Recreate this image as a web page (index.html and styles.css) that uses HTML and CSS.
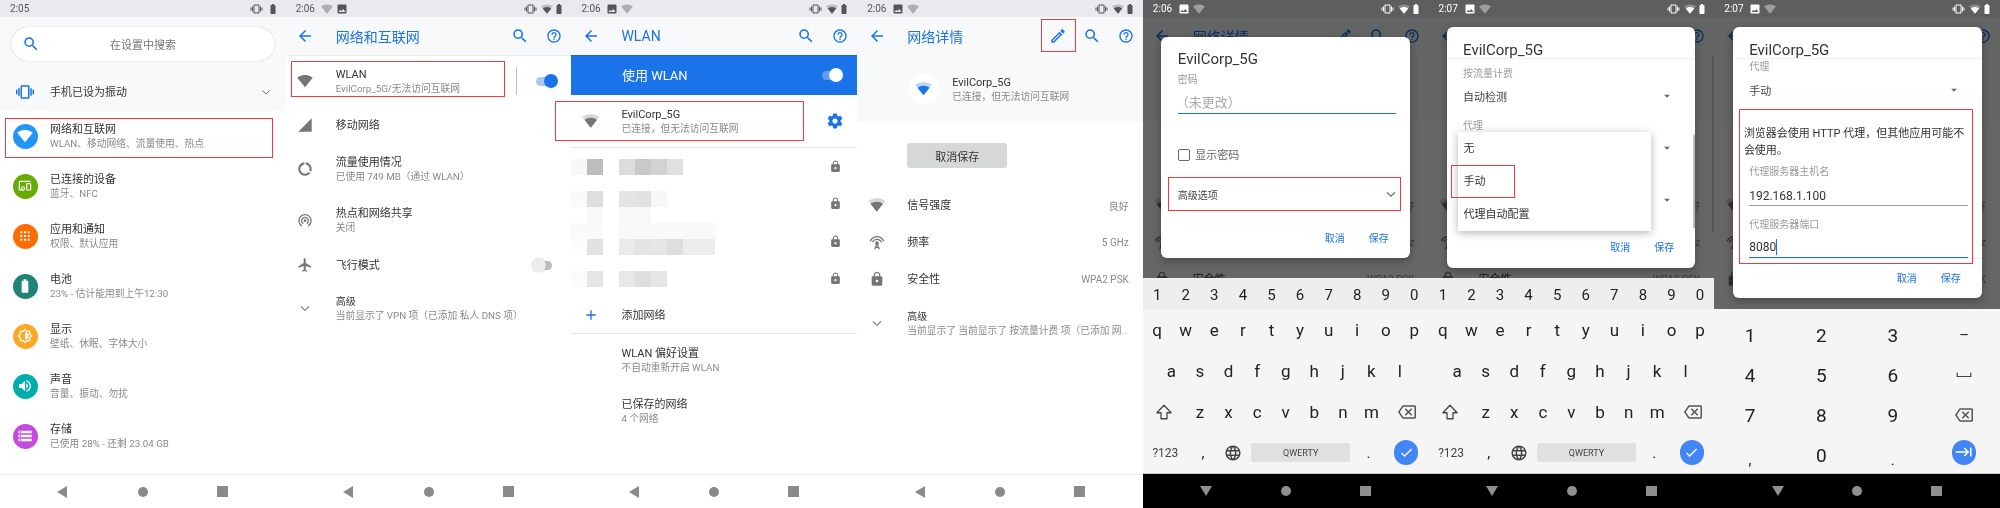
FILE: index.html
```html
<!DOCTYPE html>
<html lang="zh-CN">
<head>
<meta charset="utf-8">
<title>WLAN 代理设置步骤</title>
<link rel="stylesheet" href="styles.css">
</head>
<body>
<svg class="sprite" aria-hidden="true">
<symbol id="search" viewBox="0 0 24 24"><path d="M15.5 14h-.79l-.28-.27A6.471 6.471 0 0 0 16 9.5 6.5 6.5 0 1 0 9.5 16c1.61 0 3.09-.59 4.23-1.57l.27.28v.79l5 4.99L20.49 19l-4.99-5zm-6 0C7.01 14 5 11.99 5 9.5S7.01 5 9.5 5 14 7.01 14 9.5 11.99 14 9.5 14z"/></symbol>
<symbol id="back" viewBox="0 0 24 24"><path d="M20 11H7.83l5.59-5.59L12 4l-8 8 8 8 1.41-1.41L7.83 13H20v-2z"/></symbol>
<symbol id="help" viewBox="0 0 24 24"><path d="M11 18h2v-2h-2v2zm1-16C6.48 2 2 6.48 2 12s4.48 10 10 10 10-4.48 10-10S17.52 2 12 2zm0 18c-4.41 0-8-3.59-8-8s3.59-8 8-8 8 3.59 8 8-3.59 8-8 8zm0-14c-2.21 0-4 1.79-4 4h2c0-1.1.9-2 2-2s2 .9 2 2c0 2-3 1.75-3 5h2c0-2.25 3-2.5 3-5 0-2.21-1.79-4-4-4z"/></symbol>
<symbol id="vibrate" viewBox="0 0 24 24"><path d="M0 15h2V9H0v6zm3 2h2V7H3v10zm19-8v6h2V9h-2zm-3 8h2V7h-2v10zM16.5 3h-9C6.67 3 6 3.67 6 4.5v15c0 .83.67 1.5 1.5 1.5h9c.83 0 1.5-.67 1.5-1.5v-15c0-.83-.67-1.5-1.5-1.5zM16 19H8V5h8v14z"/></symbol>
<symbol id="chev" viewBox="0 0 24 24"><path d="M6 9.5l6 6 6-6" fill="none" stroke="currentColor" stroke-width="1.6"/></symbol>
<symbol id="wifi" viewBox="0 0 24 24"><path d="M12.01 21.49L23.64 7c-.45-.34-4.93-4-11.64-4C5.28 3 .81 6.66.36 7l11.63 14.49.01.01.01-.01z"/></symbol>
<symbol id="wifi3" viewBox="0 0 24 24"><path opacity=".3" d="M12.01 21.49L23.64 7c-.45-.34-4.93-4-11.64-4C5.28 3 .81 6.66.36 7l11.63 14.49.01.01.01-.01z"/><path d="M3.53 10.95l8.46 10.54.01.01.01-.01 8.46-10.54C20.04 10.62 16.81 8 12 8c-4.81 0-8.04 2.62-8.47 2.95z"/></symbol>
<symbol id="signal" viewBox="0 0 24 24"><path d="M2 22h20V2z"/></symbol>
<symbol id="data" viewBox="0 0 24 24"><path d="M13 2.05v3.03c3.39.49 6 3.39 6 6.92 0 .9-.18 1.75-.48 2.54l2.6 1.53c.56-1.24.88-2.62.88-4.07 0-5.18-3.95-9.45-9-9.95zM12 19c-3.87 0-7-3.13-7-7 0-3.53 2.61-6.43 6-6.92V2.05c-5.06.5-9 4.76-9 9.95 0 5.52 4.47 10 9.99 10 3.31 0 6.24-1.61 8.06-4.09l-2.6-1.53C16.17 17.98 14.21 19 12 19z"/></symbol>
<symbol id="tether" viewBox="0 0 24 24"><path d="M12 11c-1.1 0-2 .9-2 2s.9 2 2 2 2-.9 2-2-.9-2-2-2zm6 2c0-3.31-2.69-6-6-6s-6 2.69-6 6c0 2.22 1.21 4.15 3 5.19l1-1.74c-1.19-.7-2-1.97-2-3.45 0-2.21 1.79-4 4-4s4 1.79 4 4c0 1.48-.81 2.75-2 3.45l1 1.74c1.79-1.04 3-2.97 3-5.19zM12 3C6.48 3 2 7.48 2 13c0 3.7 2.01 6.92 4.99 8.65l1-1.73C5.61 18.53 4 15.96 4 13c0-4.42 3.58-8 8-8s8 3.58 8 8c0 2.96-1.61 5.53-4 6.92l1 1.73c2.99-1.73 5-4.95 5-8.65 0-5.52-4.48-10-10-10z"/></symbol>
<symbol id="plane" viewBox="0 0 24 24"><path d="M21 16v-2l-8-5V3.5c0-.83-.67-1.5-1.5-1.5S10 2.67 10 3.5V9l-8 5v2l8-2.5V19l-2 1.5V22l3.5-1 3.5 1v-1.5L13 19v-5.5l8 2.5z"/></symbol>
<symbol id="gear" viewBox="0 0 24 24"><path d="M19.43 12.98c.04-.32.07-.64.07-.98s-.03-.66-.07-.98l2.11-1.65c.19-.15.24-.42.12-.64l-2-3.46c-.12-.22-.39-.3-.61-.22l-2.49 1c-.52-.4-1.08-.73-1.69-.98l-.38-2.65C14.46 2.18 14.25 2 14 2h-4c-.25 0-.46.18-.49.42l-.38 2.65c-.61.25-1.17.59-1.69.98l-2.49-1c-.23-.09-.49 0-.61.22l-2 3.46c-.13.22-.07.49.12.64l2.11 1.65c-.04.32-.07.65-.07.98s.03.66.07.98l-2.11 1.65c-.19.15-.24.42-.12.64l2 3.46c.12.22.39.3.61.22l2.49-1c.52.4 1.08.73 1.69.98l.38 2.65c.03.24.24.42.49.42h4c.25 0 .46-.18.49-.42l.38-2.65c.61-.25 1.17-.59 1.69-.98l2.49 1c.23.09.49 0 .61-.22l2-3.46c.12-.22.07-.49-.12-.64l-2.11-1.65zM12 15.5c-1.93 0-3.5-1.57-3.5-3.5s1.57-3.5 3.5-3.5 3.5 1.57 3.5 3.5-1.57 3.5-3.5 3.5z"/></symbol>
<symbol id="lock" viewBox="0 0 24 24"><path d="M18 8h-1V6c0-2.76-2.24-5-5-5S7 3.24 7 6v2H6c-1.1 0-2 .9-2 2v10c0 1.1.9 2 2 2h12c1.1 0 2-.9 2-2V10c0-1.1-.9-2-2-2zm-6 9c-1.1 0-2-.9-2-2s.9-2 2-2 2 .9 2 2-.9 2-2 2zm3.1-9H8.9V6c0-1.71 1.39-3.1 3.1-3.1 1.71 0 3.1 1.39 3.1 3.1v2z"/></symbol>
<symbol id="add" viewBox="0 0 24 24"><path d="M19 13h-6v6h-2v-6H5v-2h6V5h2v6h6v2z"/></symbol>
<symbol id="edit" viewBox="0 0 24 24"><path d="M3 17.25V21h3.75L17.81 9.94l-3.75-3.75L3 17.25zM5.92 19H5v-.92l9.06-9.06.92.92L5.92 19zM20.71 5.63l-2.34-2.34c-.39-.39-1.02-.39-1.41 0l-1.83 1.83 3.75 3.75 1.83-1.83c.39-.39.39-1.02 0-1.41z"/></symbol>
<symbol id="image" viewBox="0 0 24 24"><path d="M21 19V5c0-1.1-.9-2-2-2H5c-1.1 0-2 .9-2 2v14c0 1.1.9 2 2 2h14c1.1 0 2-.9 2-2zM8.5 13.5l2.5 3.01L14.5 12l4.5 6H5l3.5-4.5z"/></symbol>
<symbol id="battery" viewBox="0 0 24 24"><path d="M15.67 4H14V2h-4v2H8.33C7.6 4 7 4.6 7 5.33v15.33C7 21.4 7.6 22 8.33 22h7.33c.74 0 1.34-.6 1.34-1.33V5.33C17 4.6 16.4 4 15.67 4z"/></symbol>
<symbol id="backspace" viewBox="0 0 24 24"><path d="M22 3H7c-.69 0-1.23.35-1.59.88L0 12l5.41 8.11c.36.53.9.89 1.59.89h15c1.1 0 2-.9 2-2V5c0-1.1-.9-2-2-2zm0 16H7.07L2.4 12l4.66-7H22v14zM10.41 17L14 13.41 17.59 17 19 15.59 15.41 12 19 8.41 17.59 7 14 10.59 10.41 7 9 8.41 12.59 12 9 15.59z"/></symbol>
<symbol id="globe" viewBox="0 0 24 24"><path d="M11.99 2C6.47 2 2 6.48 2 12s4.47 10 9.99 10C17.52 22 22 17.52 22 12S17.52 2 11.99 2zm6.93 6h-2.95c-.32-1.25-.78-2.45-1.38-3.56 1.84.63 3.37 1.91 4.33 3.56zM12 4.04c.83 1.2 1.48 2.53 1.91 3.96h-3.82c.43-1.43 1.08-2.76 1.91-3.96zM4.26 14C4.1 13.36 4 12.69 4 12s.1-1.36.26-2h3.38c-.08.66-.14 1.32-.14 2 0 .68.06 1.34.14 2H4.26zm.82 2h2.95c.32 1.25.78 2.45 1.38 3.56-1.84-.63-3.37-1.9-4.33-3.56zm2.95-8H5.08c.96-1.66 2.49-2.93 4.33-3.56C8.81 5.55 8.35 6.75 8.03 8zM12 19.96c-.83-1.2-1.48-2.53-1.91-3.96h3.82c-.43 1.43-1.08 2.76-1.91 3.96zM14.34 14H9.66c-.09-.66-.16-1.32-.16-2 0-.68.07-1.35.16-2h4.68c.09.65.16 1.32.16 2 0 .68-.07 1.34-.16 2zm.25 5.56c.6-1.11 1.06-2.31 1.38-3.56h2.95c-.96 1.65-2.49 2.93-4.33 3.56zM16.36 14c.08-.66.14-1.32.14-2 0-.68-.06-1.34-.14-2h3.38c.16.64.26 1.31.26 2s-.1 1.36-.26 2h-3.38z"/></symbol>
<symbol id="check" viewBox="0 0 24 24"><path d="M9 16.17L4.83 12l-1.42 1.41L9 19 21 7l-1.41-1.41z"/></symbol>
<symbol id="tab" viewBox="0 0 24 24"><path d="M11.59 7.41L15.17 11H1v2h14.17l-3.59 3.59L13 18l6-6-6-6-1.41 1.41zM20 6v12h2V6h-2z"/></symbol>
<symbol id="shift" viewBox="0 0 24 24"><path d="M12 3L2.500 13H8v8h8v-8h5.500z" fill="none" stroke="currentColor" stroke-width="1.7" stroke-linejoin="round"/></symbol>
<symbol id="space" viewBox="0 0 24 24"><path d="M3 9v5h18V9" fill="none" stroke="currentColor" stroke-width="1.6"/></symbol>
<symbol id="devices" viewBox="0 0 24 24"><path d="M20 5H5a1.500 1.500 0 0 0-1.500 1.500V18H11" fill="none" stroke="currentColor" stroke-width="1.8"/><circle cx="9" cy="15.500" r="2.300" fill="none" stroke="currentColor" stroke-width="1.600"/><rect x="14.500" y="8.500" width="6" height="9.500" rx="1" fill="none" stroke="currentColor" stroke-width="1.800"/></symbol>
<symbol id="apps" viewBox="0 0 24 24"><path d="M5 5h3v3H5zM10.500 5h3v3h-3zM16 5h3v3h-3zM5 10.500h3v3H5zM10.500 10.500h3v3h-3zM16 10.500h3v3h-3zM5 16h3v3H5zM10.500 16h3v3h-3zM16 16h3v3h-3z"/></symbol>
<symbol id="bright" viewBox="0 0 24 24"><path d="M20 15.310L23.310 12 20 8.690V4h-4.690L12 .69 8.690 4H4v4.690L.69 12 4 15.310V20h4.690L12 23.310 15.310 20H20v-4.690zm-2-.83V18h-3.520L12 20.480 9.520 18H6v-3.520L3.520 12 6 9.520V6h3.520L12 3.520 14.480 6H18v3.520L20.480 12 18 14.480zM12 6.500v11c3.040 0 5.500-2.460 5.500-5.500S15.040 6.500 12 6.500z"/></symbol>
<symbol id="volume" viewBox="0 0 24 24"><path d="M14 3.230v2.060c2.890.86 5 3.540 5 6.710s-2.110 5.840-5 6.700v2.070c4.010-.91 7-4.490 7-8.770 0-4.280-2.990-7.860-7-8.770zM16.500 12c0-1.770-1.020-3.290-2.500-4.030v8.050c1.480-.73 2.500-2.250 2.500-4.020zM3 9v6h4l5 5V4L7 9H3z"/></symbol>
<symbol id="storage" viewBox="0 0 24 24"><path d="M2 20h20v-4H2v4zm2-3h2v2H4v-2zM2 4v4h20V4H2zm4 3H4V5h2v2zm-4 7h20v-4H2v4zm2-3h2v2H4v-2z"/></symbol>
<symbol id="ant" viewBox="0 0 24 24"><path d="M12 3C6.900 3 2.500 6.200 1 10.500l2 .7C4.200 7.700 7.800 5 12 5s7.800 2.700 9 6.200l2-.7C21.500 6.200 17.100 3 12 3zm0 4c-3.500 0-6.500 2.100-7.800 5l1.900.8C7.100 10.500 9.400 9 12 9s4.900 1.500 5.900 3.800l1.900-.8C18.500 9.100 15.500 7 12 7zm0 4c-1.500 0-2.800 1.200-2.800 2.800 0 .9.400 1.700 1 2.200L7.500 23h2l.8-2h3.400l.8 2h2l-2.700-7c.6-.5 1-1.300 1-2.200C14.800 12.200 13.500 11 12 11zm-1 8l1-2.600 1 2.600h-2z"/></symbol>
<symbol id="ddown" viewBox="0 0 24 24"><path d="M7 10l5 5 5-5z"/></symbol>
</svg>

<main class="strip">

<!-- 1: settings home -->
<section class="phone">
  <div class="status"><span class="clock">2:05</span><span class="status-right"><svg class="si vib"><use href="#vibrate"/></svg><svg class="si"><use href="#battery"/></svg></span></div>
  <div class="home-top">
    <div class="searchbox"><svg class="i blue"><use href="#search"/></svg><span>在设置中搜索</span></div>
    <div class="row vibrate-row">
      <span class="cell wide"><svg class="i blue"><use href="#vibrate"/></svg></span>
      <span class="title">手机已设为振动</span>
      <svg class="chev-end"><use href="#chev"/></svg>
    </div>
  </div>
  <div class="row h50"><span class="cell wide"><span class="badge c-wifi"><svg><use href="#wifi"/></svg></span></span><div class="txt"><div class="title">网络和互联网</div><div class="sub">WLAN、移动网络、流量使用、热点</div></div></div>
  <div class="row h50"><span class="cell wide"><span class="badge c-dev"><svg><use href="#devices"/></svg></span></span><div class="txt"><div class="title">已连接的设备</div><div class="sub">蓝牙、NFC</div></div></div>
  <div class="row h50"><span class="cell wide"><span class="badge c-app"><svg><use href="#apps"/></svg></span></span><div class="txt"><div class="title">应用和通知</div><div class="sub">权限、默认应用</div></div></div>
  <div class="row h50"><span class="cell wide"><span class="badge c-bat"><svg><use href="#battery"/></svg></span></span><div class="txt"><div class="title">电池</div><div class="sub">23% - 估计能用到上午12:30</div></div></div>
  <div class="row h50"><span class="cell wide"><span class="badge c-dis"><svg><use href="#bright"/></svg></span></span><div class="txt"><div class="title">显示</div><div class="sub">壁纸、休眠、字体大小</div></div></div>
  <div class="row h50"><span class="cell wide"><span class="badge c-snd"><svg><use href="#volume"/></svg></span></span><div class="txt"><div class="title">声音</div><div class="sub">音量、振动、勿扰</div></div></div>
  <div class="row h50"><span class="cell wide"><span class="badge c-sto"><svg><use href="#storage"/></svg></span></span><div class="txt"><div class="title">存储</div><div class="sub">已使用 28% - 还剩 23.04 GB</div></div></div>
  <div class="nav"><span class="nk"><svg class="nb"><path d="M10 0v12L0 6z"/></svg></span><span class="nk"><i class="nc"></i></span><span class="nk"><i class="ns"></i></span></div>
  <div class="mark m1"></div>
</section>

<!-- 2: network and internet -->
<section class="phone">
  <div class="status"><span class="clock">2:06</span><svg class="si dimmed"><use href="#wifi"/></svg><svg class="si"><use href="#image"/></svg><span class="status-right"><svg class="si vib"><use href="#vibrate"/></svg><svg class="si"><use href="#wifi3"/></svg><svg class="si"><use href="#battery"/></svg></span></div>
  <header class="appbar shadow"><span class="cell back"><svg class="i blue"><use href="#back"/></svg></span><h1>网络和互联网</h1><span class="act"><svg class="i blue"><use href="#search"/></svg></span><span class="act"><svg class="i16 blue"><use href="#help"/></svg></span></header>
  <div class="row h52"><span class="cell"><svg class="li"><use href="#wifi"/></svg></span><div class="txt"><div class="title">WLAN</div><div class="sub">EvilCorp_5G/无法访问互联网</div></div><span class="vline"></span><span class="switch on"></span></div>
  <div class="row h36"><span class="cell"><svg class="li"><use href="#signal"/></svg></span><div class="title">移动网络</div></div>
  <div class="row h52"><span class="cell"><svg class="li"><use href="#data"/></svg></span><div class="txt"><div class="title">流量使用情况</div><div class="sub">已使用 749 MB（通过 WLAN）</div></div></div>
  <div class="row h50"><span class="cell"><svg class="li"><use href="#tether"/></svg></span><div class="txt"><div class="title">热点和网络共享</div><div class="sub">关闭</div></div></div>
  <div class="row h40"><span class="cell"><svg class="li"><use href="#plane"/></svg></span><div class="title">飞行模式</div><span class="switch off"></span></div>
  <div class="row h46"><span class="cell"><svg class="li"><use href="#chev"/></svg></span><div class="txt"><div class="title small">高级</div><div class="sub">当前显示了 VPN 项（已添加 私人 DNS 项）</div></div></div>
  <div class="nav"><span class="nk"><svg class="nb"><path d="M10 0v12L0 6z"/></svg></span><span class="nk"><i class="nc"></i></span><span class="nk"><i class="ns"></i></span></div>
  <div class="mark m2"></div>
</section>

<!-- 3: WLAN -->
<section class="phone">
  <div class="status"><span class="clock">2:06</span><svg class="si"><use href="#image"/></svg><svg class="si dimmed"><use href="#wifi"/></svg><span class="status-right"><svg class="si vib"><use href="#vibrate"/></svg><svg class="si"><use href="#wifi3"/></svg><svg class="si"><use href="#battery"/></svg></span></div>
  <header class="appbar shadow"><span class="cell back"><svg class="i blue"><use href="#back"/></svg></span><h1>WLAN</h1><span class="act"><svg class="i blue"><use href="#search"/></svg></span><span class="act"><svg class="i16 blue"><use href="#help"/></svg></span></header>
  <div class="use-wlan"><span class="use-label">使用 WLAN</span><span class="switch white"></span></div>
  <div class="row connected"><span class="cell"><svg class="li wide17"><use href="#wifi3"/></svg></span><div class="txt"><div class="title">EvilCorp_5G</div><div class="sub">已连接，但无法访问互联网</div></div><svg class="gear"><use href="#gear"/></svg></div>
  <div class="wifi-list">
    <svg class="censor" viewBox="0 0 144 128">
      <rect x="0" y="0" width="16" height="16" fill="#f7f7f7"/><rect x="16" y="0" width="16" height="16" fill="#bdbdbd"/><rect x="48" y="0" width="16" height="16" fill="#dcdcdc"/><rect x="64" y="0" width="16" height="16" fill="#c9c9c9"/><rect x="80" y="0" width="16" height="16" fill="#d2d2d2"/><rect x="96" y="0" width="16" height="16" fill="#e0e0e0"/>
      <rect x="0" y="32" width="16" height="16" fill="#fafafa"/><rect x="16" y="32" width="16" height="16" fill="#dedede"/><rect x="48" y="32" width="16" height="16" fill="#e4e4e4"/><rect x="64" y="32" width="16" height="16" fill="#e2e2e2"/><rect x="80" y="32" width="16" height="16" fill="#f7f7f7"/>
      <rect x="16" y="48" width="16" height="16" fill="#f8f8f8"/><rect x="48" y="48" width="32" height="16" fill="#f8f8f8"/>
      <rect x="0" y="64" width="32" height="16" fill="#fafafa"/><rect x="48" y="64" width="96" height="16" fill="#f9f9f9"/>
      <rect x="0" y="80" width="16" height="16" fill="#fcfcfc"/><rect x="16" y="80" width="16" height="16" fill="#e2e2e2"/><rect x="48" y="80" width="16" height="16" fill="#eaeaea"/><rect x="64" y="80" width="16" height="16" fill="#e4e4e4"/><rect x="80" y="80" width="16" height="16" fill="#e6e6e6"/><rect x="96" y="80" width="16" height="16" fill="#dedede"/><rect x="112" y="80" width="32" height="16" fill="#ececec"/>
      <rect x="0" y="112" width="16" height="16" fill="#fbfbfb"/><rect x="16" y="112" width="16" height="16" fill="#e5e5e5"/><rect x="48" y="112" width="16" height="16" fill="#e8e8e8"/><rect x="64" y="112" width="16" height="16" fill="#dedede"/><rect x="80" y="112" width="16" height="16" fill="#e6e6e6"/>
    </svg>
    <div class="lock-row"><svg class="lock"><use href="#lock"/></svg></div>
    <div class="lock-row"><svg class="lock"><use href="#lock"/></svg></div>
    <div class="lock-row"><svg class="lock"><use href="#lock"/></svg></div>
    <div class="lock-row"><svg class="lock"><use href="#lock"/></svg></div>
  </div>
  <div class="row add-row"><span class="cell"><svg class="li plus"><use href="#add"/></svg></span><div class="title">添加网络</div></div>
  <div class="row h51"><span class="cell"></span><div class="txt"><div class="title">WLAN 偏好设置</div><div class="sub">不自动重新开启 WLAN</div></div></div>
  <div class="row h51"><span class="cell"></span><div class="txt"><div class="title">已保存的网络</div><div class="sub">4 个网络</div></div></div>
  <div class="nav"><span class="nk"><svg class="nb"><path d="M10 0v12L0 6z"/></svg></span><span class="nk"><i class="nc"></i></span><span class="nk"><i class="ns"></i></span></div>
  <div class="mark m3"></div>
</section>

<!-- 4: network details -->
<section class="phone">
  <div class="status"><span class="clock">2:06</span><svg class="si"><use href="#image"/></svg><svg class="si dimmed"><use href="#wifi"/></svg><span class="status-right"><svg class="si vib"><use href="#vibrate"/></svg><svg class="si"><use href="#wifi3"/></svg><svg class="si"><use href="#battery"/></svg></span></div>
  <header class="appbar"><span class="cell back"><svg class="i blue"><use href="#back"/></svg></span><h1>网络详情</h1><span class="act"><svg class="i blue"><use href="#edit"/></svg></span><span class="act"><svg class="i blue"><use href="#search"/></svg></span><span class="act"><svg class="i16 blue"><use href="#help"/></svg></span></header>
  <div class="hero"><span class="hero-ic"><svg><use href="#wifi3"/></svg></span><div class="txt"><div class="title">EvilCorp_5G</div><div class="sub">已连接，但无法访问互联网</div></div></div>
  <div class="forget">取消保存</div>
  <div class="row h37"><span class="cell"><svg class="li wide17"><use href="#wifi3"/></svg></span><div class="title">信号强度</div><span class="val">良好</span></div>
  <div class="row h37"><span class="cell"><svg class="li"><use href="#ant"/></svg></span><div class="title">频率</div><span class="val">5 GHz</span></div>
  <div class="row h37"><span class="cell"><svg class="li"><use href="#lock"/></svg></span><div class="title">安全性</div><span class="val">WPA2 PSK</span></div>
  <div class="row h51"><span class="cell"><svg class="li"><use href="#chev"/></svg></span><div class="txt clip"><div class="title small">高级</div><div class="sub">当前显示了 当前显示了 按流量计费 项（已添加 网..</div></div></div>
  <div class="nav"><span class="nk"><svg class="nb"><path d="M10 0v12L0 6z"/></svg></span><span class="nk"><i class="nc"></i></span><span class="nk"><i class="ns"></i></span></div>
  <div class="mark m4"></div>
</section>

<!-- 5: password dialog -->
<section class="phone dim">
  <div class="status"><span class="clock">2:06</span><svg class="si"><use href="#image"/></svg><svg class="si dimmed"><use href="#wifi"/></svg><span class="status-right"><svg class="si vib"><use href="#vibrate"/></svg><svg class="si"><use href="#wifi3"/></svg><svg class="si"><use href="#battery"/></svg></span></div>
  <header class="appbar"><span class="cell back"><svg class="i blue"><use href="#back"/></svg></span><h1>网络详情</h1><span class="act"><svg class="i blue"><use href="#edit"/></svg></span><span class="act"><svg class="i blue"><use href="#search"/></svg></span><span class="act"><svg class="i16 blue"><use href="#help"/></svg></span></header>
  <div class="hero"></div>
  <div class="forget blank"></div>
  <div class="row h37"><span class="cell"><svg class="li wide17"><use href="#wifi3"/></svg></span><span class="val">良好</span></div>
  <div class="row h37"><span class="cell"><svg class="li"><use href="#ant"/></svg></span><span class="val">5 GHz</span></div>
  <div class="row h37"><span class="cell"><svg class="li"><use href="#lock"/></svg></span><div class="title">安全性</div><span class="val">WPA2 PSK</span></div>
  <div class="scrim"></div>
  <div class="dialog d5">
    <div class="dlg-name">EvilCorp_5G</div>
    <div class="fld-label pw-label">密码</div>
    <div class="pw-input">（未更改）</div>
    <div class="check-row"><i class="box"></i><span>显示密码</span></div>
    <div class="adv-row"><span>高级选项</span><svg><use href="#chev"/></svg></div>
    <div class="actions a5"><span>取消</span><span>保存</span></div>
  </div>
  <div class="kbd">
    <div class="numrow"><span>1</span><span>2</span><span>3</span><span>4</span><span>5</span><span>6</span><span>7</span><span>8</span><span>9</span><span>0</span></div>
    <div class="krow"><span>q</span><span>w</span><span>e</span><span>r</span><span>t</span><span>y</span><span>u</span><span>i</span><span>o</span><span>p</span></div>
    <div class="krow inset"><span>a</span><span>s</span><span>d</span><span>f</span><span>g</span><span>h</span><span>j</span><span>k</span><span>l</span></div>
    <div class="krow"><span class="w15"><svg class="k-shift"><use href="#shift"/></svg></span><span>z</span><span>x</span><span>c</span><span>v</span><span>b</span><span>n</span><span>m</span><span class="w15"><svg class="k-back"><use href="#backspace"/></svg></span></div>
    <div class="krow last"><span class="w15 sym">?123</span><span>,</span><span><svg class="k-globe"><use href="#globe"/></svg></span><span class="spacebar"><b>QWERTY</b></span><span>.</span><span class="w15"><i class="go"><svg><use href="#check"/></svg></i></span></div>
  </div>
  <div class="nav"><span class="nk"><svg class="nb"><path d="M0 0h12L6 10z"/></svg></span><span class="nk"><i class="nc"></i></span><span class="nk"><i class="ns"></i></span></div>
  <div class="mark m5"></div>
</section>

<!-- 6: proxy dropdown -->
<section class="phone dim">
  <div class="status"><span class="clock">2:07</span><svg class="si"><use href="#image"/></svg><svg class="si dimmed"><use href="#wifi"/></svg><span class="status-right"><svg class="si vib"><use href="#vibrate"/></svg><svg class="si"><use href="#wifi3"/></svg><svg class="si"><use href="#battery"/></svg></span></div>
  <header class="appbar"><span class="cell back"><svg class="i blue"><use href="#back"/></svg></span><h1 class="covered"></h1><span class="act"><svg class="i blue"><use href="#edit"/></svg></span><span class="act"><svg class="i blue"><use href="#search"/></svg></span><span class="act"><svg class="i16 blue"><use href="#help"/></svg></span></header>
  <div class="hero"></div>
  <div class="forget blank"></div>
  <div class="row h37"><span class="cell"><svg class="li wide17"><use href="#wifi3"/></svg></span><span class="val">良好</span></div>
  <div class="row h37"><span class="cell"><svg class="li"><use href="#ant"/></svg></span><span class="val">5 GHz</span></div>
  <div class="row h37"><span class="cell"><svg class="li"><use href="#lock"/></svg></span><div class="title">安全性</div><span class="val">WPA2 PSK</span></div>
  <div class="scrim"><i class="page-scroll"></i></div>
  <div class="dialog d6">
    <div class="dlg-head">EvilCorp_5G</div>
    <div class="fld-label first">按流量计费</div>
    <div class="select"><span>自动检测</span><svg><use href="#ddown"/></svg></div>
    <div class="fld-label gap8">代理</div>
    <div class="select"><span></span><svg><use href="#ddown"/></svg></div>
    <div class="select spaced"><span></span><svg><use href="#ddown"/></svg></div>
    <div class="actions a6"><span>取消</span><span>保存</span></div>
    <i class="dlg-scroll"></i>
    <div class="popup"><div>无</div><div>手动</div><div>代理自动配置</div></div>
  </div>
  <div class="kbd">
    <div class="numrow"><span>1</span><span>2</span><span>3</span><span>4</span><span>5</span><span>6</span><span>7</span><span>8</span><span>9</span><span>0</span></div>
    <div class="krow"><span>q</span><span>w</span><span>e</span><span>r</span><span>t</span><span>y</span><span>u</span><span>i</span><span>o</span><span>p</span></div>
    <div class="krow inset"><span>a</span><span>s</span><span>d</span><span>f</span><span>g</span><span>h</span><span>j</span><span>k</span><span>l</span></div>
    <div class="krow"><span class="w15"><svg class="k-shift"><use href="#shift"/></svg></span><span>z</span><span>x</span><span>c</span><span>v</span><span>b</span><span>n</span><span>m</span><span class="w15"><svg class="k-back"><use href="#backspace"/></svg></span></div>
    <div class="krow last"><span class="w15 sym">?123</span><span>,</span><span><svg class="k-globe"><use href="#globe"/></svg></span><span class="spacebar"><b>QWERTY</b></span><span>.</span><span class="w15"><i class="go"><svg><use href="#check"/></svg></i></span></div>
  </div>
  <div class="nav"><span class="nk"><svg class="nb"><path d="M0 0h12L6 10z"/></svg></span><span class="nk"><i class="nc"></i></span><span class="nk"><i class="ns"></i></span></div>
  <div class="mark m6"></div>
</section>

<!-- 7: manual proxy -->
<section class="phone dim">
  <div class="status"><span class="clock">2:07</span><svg class="si"><use href="#image"/></svg><svg class="si dimmed"><use href="#wifi"/></svg><span class="status-right"><svg class="si vib"><use href="#vibrate"/></svg><svg class="si"><use href="#wifi3"/></svg><svg class="si"><use href="#battery"/></svg></span></div>
  <header class="appbar"><span class="cell back"><svg class="i blue"><use href="#back"/></svg></span><h1 class="covered"></h1><span class="act"><svg class="i blue"><use href="#edit"/></svg></span><span class="act"><svg class="i blue"><use href="#search"/></svg></span><span class="act"><svg class="i16 blue"><use href="#help"/></svg></span></header>
  <div class="hero"></div>
  <div class="forget blank"></div>
  <div class="row h37"><span class="cell"><svg class="li wide17"><use href="#wifi3"/></svg></span><span class="val">良好</span></div>
  <div class="row h37"><span class="cell"><svg class="li"><use href="#ant"/></svg></span><span class="val">5 GHz</span></div>
  <div class="row h37"><span class="cell"><svg class="li"><use href="#lock"/></svg></span><span class="val">WPA2 PSK</span></div>
  <div class="scrim"></div>
  <div class="dialog d7">
    <div class="dlg-head">EvilCorp_5G</div>
    <div class="fld-label tight">代理</div>
    <div class="select"><span>手动</span><svg><use href="#ddown"/></svg></div>
    <p class="proxy-note">浏览器会使用 HTTP 代理，但其他应用可能不<br>会使用。</p>
    <div class="fld-label host">代理服务器主机名</div>
    <div class="input-line">192.168.1.100</div>
    <div class="fld-label port">代理服务器端口</div>
    <div class="input-line focus">8080<i class="caret"></i></div>
    <div class="dlg-foot"><div class="actions a7"><span>取消</span><span>保存</span></div></div>
  </div>
  <div class="numpad">
    <span>1</span><span>2</span><span>3</span><span class="np-sym">–</span>
    <span>4</span><span>5</span><span>6</span><span><svg class="np-space"><use href="#space"/></svg></span>
    <span>7</span><span>8</span><span>9</span><span><svg class="k-back"><use href="#backspace"/></svg></span>
    <span class="np-punct">,</span><span>0</span><span class="np-punct">.</span><span><i class="go up"><svg><use href="#tab"/></svg></i></span>
  </div>
  <div class="nav"><span class="nk"><svg class="nb"><path d="M0 0h12L6 10z"/></svg></span><span class="nk"><i class="nc"></i></span><span class="nk"><i class="ns"></i></span></div>
  <div class="mark m7"></div>
</section>

</main>
</body>
</html>
```

FILE: styles.css
```css
* { box-sizing: border-box; }
html, body { margin: 0; padding: 0; background: #fff; }
body { font-family: Roboto, "Noto Sans CJK SC", sans-serif; color: #333; overflow: hidden; }
svg { fill: currentColor; display: block; }
i { font-style: normal; display: block; }
.sprite { position: absolute; width: 0; height: 0; }

.strip { display: grid; grid-template-columns: repeat(7, 1fr); width: 2000px; height: 508px; filter: blur(.35px); }
.phone { position: relative; height: 508px; overflow: hidden; background: #fff; display: flex; flex-direction: column; }

/* status bar */
.status { height: 17px; flex: none; display: flex; align-items: center; padding: 0 6.7px 0 10px; background: #e8eaed; color: #555; position: relative; }
.clock { font-size: 10px; width: 25px; flex: none; }
.si { width: 12px; height: 12px; margin-right: 3px; flex: none; }
.status-right { margin-left: auto; display: flex; align-items: center; }
.status-right .si { margin-right: 0; }
.status-right .vib { width: 13px; margin-right: 4px; }
.dimmed { opacity: .4; }

/* app bar */
.appbar { height: 38px; flex: none; display: flex; align-items: center; background: #f8f9fa; color: #1a73e8; position: relative; }
.appbar.shadow { box-shadow: 0 1px 1px rgba(0,0,0,.08); z-index: 1; }
.appbar h1 { margin: 0; flex: 1; font-size: 14px; font-weight: 400; color: #1a73e8; }
.back { width: 50px; }
.act { width: 34px; flex: none; display: flex; justify-content: center; }
.i { width: 18px; height: 18px; flex: none; }
.i16 { width: 16px; height: 16px; }
.blue { color: #1a73e8; }

/* rows */
.row { display: flex; align-items: center; flex: none; }
.row > .title { margin-top: 2px; }
.h36 { height: 36px; } .h37 { height: 37px; } .h40 { height: 40px; } .h46 { height: 46px; }
.h50 { height: 50px; } .h51 { height: 51px; } .h52 { height: 52px; }
.cell { width: 50px; flex: none; display: flex; justify-content: center; padding-right: 11px; color: #757575; }
.cell.wide { padding-right: 0; }
.txt { min-width: 0; margin-top: 2.5px; }
.title { font-size: 11px; line-height: 14px; color: #333; white-space: nowrap; }
.title.small { font-size: 10px; }
.sub { font-size: 9.75px; line-height: 14px; color: #8a8a8a; white-space: nowrap; }
.li { width: 16px; height: 16px; color: #757575; }
.wide17 { width: 17.5px; height: 17.5px; }
.clip { overflow: hidden; width: 221px; }

/* settings home */
.home-top { height: 94px; background: #f8f9fa; flex: none; padding-top: 10px; }
.searchbox { margin: 0 10.7px 0 11px; height: 34px; border-radius: 17px; background: #fff; box-shadow: 0 0 1px rgba(0,0,0,.35); display: flex; align-items: center; padding-left: 11px; font-size: 11px; color: #777; }
.searchbox span { margin-left: 70px; }
.vibrate-row { height: 38px; margin-top: 12px; }
.chev-end { width: 14px; height: 14px; margin-left: auto; margin-right: 12.7px; color: #666; }
.badge { width: 25px; height: 25px; border-radius: 50%; display: flex; align-items: center; justify-content: center; color: #fff; }
.badge svg { width: 16px; height: 16px; }
.c-wifi { background: #2196f3; } .c-dev { background: #67ab05; } .c-app { background: #ff6d00; }
.c-bat { background: #218377; } .c-dis { background: #ffa726; } .c-snd { background: #00acac; } .c-sto { background: #c34ade; }

/* switch */
.switch { width: 17px; height: 9px; border-radius: 5px; position: relative; flex: none; }
.switch::after { content: ""; position: absolute; top: -2.5px; width: 14px; height: 14px; border-radius: 50%; }
.switch.on { background: #a9c7f4; margin-left: 19px; margin-right: 18.7px; }
.switch.on::after { right: -5px; background: #1a73e8; }
.switch.off { background: #bdbdbd; margin-left: auto; margin-right: 19px; }
.switch.off::after { left: -3px; background: #ececec; box-shadow: 0 0 2px rgba(0,0,0,.2); }
.switch.white { background: #5f9eee; width: 20px; margin-right: 15px; }
.switch.white::after { right: -1px; background: #fff; }
.vline { width: 1px; height: 28px; background: #bdbdbd; margin-left: auto; flex: none; }

/* WLAN */
.use-wlan { height: 40px; flex: none; background: #1a73e8; color: #fff; font-size: 13px; display: flex; align-items: center; justify-content: space-between; padding-left: 50.5px; }
.use-label { margin-top: -2px; }
.connected { height: 52.5px; border-bottom: 1px solid #e6e6e6; }
.gear { width: 18px; height: 18px; color: #1a73e8; margin-left: auto; margin-right: 13px; }
.wifi-list { position: relative; flex: none; }
.censor { position: absolute; left: 0; top: 11px; width: 144px; height: 128px; }
.lock-row { height: 37.5px; display: flex; align-items: center; justify-content: flex-end; padding-right: 15.5px; }
.lock { width: 13px; height: 13px; color: #757575; }
.add-row { height: 36.5px; border-bottom: 1px solid #e6e6e6; }
.plus { width: 16px; height: 16px; color: #1a73e8; }

/* details */
.hero { height: 67px; flex: none; background: #f8f9fa; display: flex; align-items: center; padding-left: 51.5px; }
.hero-ic { width: 30px; height: 30px; border-radius: 50%; background: #fff; display: flex; align-items: center; justify-content: center; color: #1a73e8; margin-right: 13.5px; flex: none; }
.hero-ic svg { width: 17px; height: 17px; }
.forget { width: 100px; height: 25px; margin: 21px 0 18.5px 50px; flex: none; background: #d6d7d7; border-radius: 3px; display: flex; align-items: center; justify-content: center; font-size: 11px; color: #333; }
.forget.blank { background: none; }
.val { margin-left: auto; margin-right: 14px; font-size: 10px; color: #8a8a8a; }

/* nav bar */
.nav { position: absolute; left: 0; right: 0; top: 474px; height: 34px; background: #fff; border-top: 1px solid #eee; display: flex; align-items: center; padding-left: 23.7px; color: #8a8a8a; z-index: 5; }
.nk { width: 79.5px; display: flex; justify-content: center; }
.nb { width: 12px; height: 12px; }
.nc { width: 10px; height: 10px; border-radius: 50%; background: currentColor; }
.ns { width: 11px; height: 10.5px; background: currentColor; }
.dim .nav { background: #000; border-top: 0; color: #8f8f8f; }
.dim .nb { height: 10px; }

/* dim phones */
.scrim { position: absolute; inset: 17px 0 0 0; background: rgba(0,0,0,.6); z-index: 2; }
.dim .status { background: #5d5e5f; color: #fff; z-index: 3; }
.page-scroll { position: absolute; right: 0; top: 38px; width: 2.5px; height: 177px; background: #555; }

/* dialog */
.dialog { position: absolute; z-index: 3; background: #fff; border-radius: 6px; padding: 0 14px 0 16.5px; box-shadow: 0 3px 8px rgba(0,0,0,.3); }
.d5 { left: 18.5px; top: 37px; width: 248.5px; height: 221px; padding-top: 12px; }
.d6 { left: 18px; top: 27px; width: 248.7px; height: 241px; padding-top: 13px; }
.d7 { left: 18.4px; top: 27px; width: 249px; height: 271px; padding-top: 13px; }
.dlg-name { font-size: 15px; line-height: 20px; height: 18px; color: #333; }
.dlg-head { font-size: 15px; line-height: 20px; height: 18px; margin: 0 -14px 0 -16.5px; padding-left: 16.5px; box-shadow: 0 1px 1px rgba(0,0,0,.05); color: #333; overflow: hidden; }
.fld-label { font-size: 10px; line-height: 16px; height: 14px; color: #9a9a9a; white-space: nowrap; }
.pw-label { margin-top: 5px; }
.pw-input { height: 28px; font-size: 13px; line-height: 33px; margin-left: 0; text-indent: -2px; color: #aaa; border-bottom: 1.2px solid #1a73e8; overflow: hidden; }
.check-row { height: 20px; margin-top: 31px; padding-bottom: 2px; display: flex; align-items: center; font-size: 11px; color: #666; }
.box { width: 12.5px; height: 12.5px; border: 1.3px solid #666; border-radius: 2px; margin: 2px 5px 0 0; }
.adv-row { height: 34px; margin-top: 12px; display: flex; align-items: center; justify-content: space-between; font-size: 10px; color: #444; }
.adv-row svg { width: 16px; height: 16px; margin-right: -3px; color: #555; }
.actions { display: flex; justify-content: flex-end; gap: 24px; height: 20px; padding-bottom: 2px; align-items: center; margin-right: 7px; font-size: 10px; color: #1a73e8; }
.a5 { margin-top: 17px; }
.a6 { margin-top: 23px; }
.a7 { padding-bottom: 0; }
.first { margin-top: 8px; }
.gap8 { margin-top: 8px; }
.tight { margin-top: 2px; line-height: 14px; }
.select { height: 28px; margin-top: 2px; display: flex; align-items: center; justify-content: space-between; font-size: 11px; color: #444; }
.select svg { width: 14px; height: 14px; margin-right: 7px; color: #666; }
.select.spaced { margin-top: 24px; }
.dlg-scroll { position: absolute; left: 246px; top: 108px; width: 2px; height: 93px; background: #bbb; }
.popup { position: absolute; left: 11px; top: 104.7px; width: 193px; height: 99.3px; background: #fff; box-shadow: 0 2px 8px rgba(0,0,0,.3); font-size: 11px; color: #333; }
.popup div { height: 33.1px; line-height: 33px; padding-left: 6px; }
.popup div:last-child { line-height: 34px; }
.proxy-note { margin: 20.5px 0 0 -5.3px; font-size: 11px; line-height: 17px; color: #333; white-space: nowrap; }
.host { margin-top: 5.5px; }
.port { margin-top: 11.5px; }
.input-line { height: 27.5px; padding-top: 9px; font-size: 12px; color: #333; border-bottom: 1px solid #9e9e9e; display: flex; align-items: center; }
.input-line.focus { height: 26.5px; padding-top: 6px; border-bottom-color: #1a73e8; }
.caret { width: 1px; height: 16px; background: #1a73e8; }
.dlg-foot { margin: 0 -14px 0 -16.5px; border-top: 1px solid #eee; padding: 9px 14px 0 0; }

/* keyboard */
.kbd { position: absolute; left: 0; right: 0; top: 278px; height: 196px; background: #f5f5f5; z-index: 4; border-bottom: 1px solid #c8c8c8; }
.numrow { height: 31px; padding-top: 3px; background: #eee; display: flex; font-size: 15px; color: #222; }
.krow { height: 41px; display: flex; font-size: 17px; color: #222; }
.krow.inset { padding: 0 14.3px; }
.numrow span, .krow span { flex: 1 1 0; display: flex; align-items: center; justify-content: center; }
.krow span.w15 { flex: 1.5 1 0; }
.krow.last span { font-size: 15px; }
.krow.last span.sym { font-size: 12px; color: #444; }
.krow.last span.spacebar { flex: 3.5 1 0; }
.spacebar b { width: 99px; height: 19.5px; background: #e0e0e0; border-radius: 2px; display: flex; align-items: center; justify-content: center; font-weight: 400; font-size: 9px; color: #444; }
.k-shift { width: 18px; height: 18px; color: #444; }
.k-back { width: 18px; height: 18px; color: #555; }
.k-globe { width: 18px; height: 18px; color: #444; }
.go { width: 24.4px; height: 24.4px; border-radius: 50%; background: #4285f4; color: #fff; display: flex; align-items: center; justify-content: center; }
.go svg { width: 15px; height: 15px; }
.numpad { position: absolute; left: 0; right: 0; top: 309px; height: 165px; padding-top: 6px; background: #f5f5f5; border-bottom: 1px solid #c8c8c8; z-index: 4; display: grid; grid-template-columns: repeat(4, 1fr); grid-auto-rows: 40px; font-size: 19px; color: #222; }
.numpad span { display: flex; align-items: center; justify-content: center; }
.np-sym { font-size: 15px; }
.np-space { width: 18px; height: 18px; color: #444; }
.np-punct { font-size: 15px; padding-top: 10px; }
.go.up { margin-top: -5px; }
.go.up svg { width: 18px; height: 18px; }

/* annotation boxes */
.mark { position: absolute; border: 1.5px solid #f4393c; z-index: 6; }
.m1 { left: 5px; top: 118px; width: 267.5px; height: 40px; }
.m2 { left: 5.3px; top: 61px; width: 214px; height: 36px; }
.m3 { left: -16.4px; top: 101px; width: 249px; height: 40px; }
.m4 { left: 183.5px; top: 19px; width: 35.5px; height: 33px; }
.m5 { left: 24.8px; top: 177px; width: 233.3px; height: 34px; }
.m6 { left: 22.9px; top: 164.7px; width: 64px; height: 33px; }
.m7 { left: 24.7px; top: 108.7px; width: 234px; height: 155.5px; }
.phone:has(.m3) { overflow: visible; }
```
